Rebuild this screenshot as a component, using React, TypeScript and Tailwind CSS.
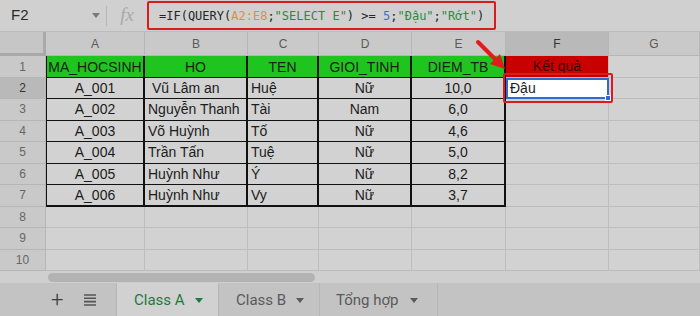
import React from 'react';

const COLS = ['A', 'B', 'C', 'D', 'E', 'F', 'G'];
const GRID = 'grid grid-cols-[46px_99px_103px_71px_93px_94px_103px_1fr]';

type Row = { id: string; ho: string; ten: string; gt: string; diem: string };

const ROWS: Row[] = [
  { id: 'A_001', ho: ' Vũ Lâm an', ten: 'Huệ', gt: 'Nữ', diem: '10,0' },
  { id: 'A_002', ho: 'Nguyễn Thanh', ten: 'Tài', gt: 'Nam', diem: '6,0' },
  { id: 'A_003', ho: 'Võ Huỳnh', ten: 'Tố', gt: 'Nữ', diem: '4,6' },
  { id: 'A_004', ho: 'Trần Tấn', ten: 'Tuệ', gt: 'Nữ', diem: '5,0' },
  { id: 'A_005', ho: 'Huỳnh Như', ten: 'Ý', gt: 'Nữ', diem: '8,2' },
  { id: 'A_006', ho: 'Huỳnh Như', ten: 'Vy', gt: 'Nữ', diem: '3,7' },
];

const HEADERS = ['MA_HOCSINH', 'HO', 'TEN', 'GIOI_TINH', 'DIEM_TB'];
const ALIGN = ['justify-center', 'justify-start', 'justify-start', 'justify-center', 'justify-center'];
const ROW_H = 'h-[21.5px]';

function Caret({ className = '' }: { className?: string }) {
  return (
    <svg width="8" height="5" viewBox="0 0 8 5" className={className}>
      <path d="M0 0h8L4 5z" fill="currentColor" />
    </svg>
  );
}

function FormulaBar() {
  return (
    <div className="flex h-[32px] items-center border-b border-[#bcbcbc] bg-[#d0d0d0]">
      <div className="flex w-[106px] items-center pl-[11px] text-[15px] text-[#2a2a2a]">
        <span>F2</span>
        <Caret className="ml-auto mr-[6px] text-[#7a7a7a]" />
      </div>
      <div className="h-[20px] w-px bg-[#b8b8b8]" />
      <span className="w-[40px] text-center font-['Liberation_Serif'] text-[19px] italic text-[#a8a8a8]">fx</span>
      <div className="flex h-[29px] w-[349px] items-center overflow-hidden whitespace-pre rounded-[2px] border-2 border-[#d81c1c] pl-[10px] font-['DejaVu_Sans_Mono',monospace] text-[12px] text-[#262626]">
        <span>=IF(QUERY(</span>
        <span className="text-[#d99140]">A2:E8</span>
        <span>;</span>
        <span className="text-[#2b8a3e]">"SELECT E"</span>
        <span>) &gt;= </span>
        <span className="text-[#3f6fc8]">5</span>
        <span>;</span>
        <span className="text-[#2b8a3e]">"Đậu"</span>
        <span>;</span>
        <span className="text-[#2b8a3e]">"Rớt"</span>
        <span>)</span>
      </div>
    </div>
  );
}

function ColumnHeader() {
  return (
    <div className={`${GRID} h-[24px] text-[12px] text-[#5a5a5a]`}>
      <div className="border-b-[3px] border-r-[3px] border-[#a9a9a9] bg-[#c6c6c6]" />
      {COLS.map((c) => (
        <div
          key={c}
          className={`flex items-center justify-center border-b border-r border-[#b6b6b6] ${
            c === 'F' ? 'bg-[#b9b9b9] text-[#333]' : 'bg-[#c9c9c9]'
          }`}
        >
          {c}
        </div>
      ))}
    </div>
  );
}

function RowHead({ n }: { n: number }) {
  return (
    <div
      className={`flex items-center justify-center border-b border-r border-[#b6b6b6] text-[12px] ${
        n === 2 ? 'bg-[#b9b9b9] text-[#333]' : 'bg-[#c9c9c9] text-[#666]'
      }`}
    >
      {n}
    </div>
  );
}

function Blank() {
  return <div className="border-b border-r border-[#bdbdbd]" />;
}

function Sheet() {
  return (
    <div className="relative bg-[#d2d2d2] font-['Liberation_Sans',Arial,sans-serif] text-[14px] text-[#1c1c1c]">
      <ColumnHeader />

      {/* header row 1 */}
      <div className={`${GRID} ${ROW_H}`}>
        <RowHead n={1} />
        {HEADERS.map((h, i) => (
          <div
            key={h}
            className={`flex items-center justify-center border-b-[1.5px] border-r-2 border-[#111] bg-[#1fc41f] leading-none ${i === 0 ? 'border-l' : ''}`}
          >
            {h}
          </div>
        ))}
        <div className="flex items-center justify-center border-b border-r border-[#bdbdbd] bg-[#c90000] text-[#3a0000]">
          Kết quả
        </div>
        <Blank />
      </div>

      {ROWS.map((r, ri) => {
        const vals = [r.id, r.ho, r.ten, r.gt, r.diem];
        return (
          <div key={r.id} className={`${GRID} ${ROW_H}`}>
            <RowHead n={ri + 2} />
            {vals.map((v, i) => (
              <div
                key={i}
                className={`flex items-center whitespace-pre px-[3px] leading-none ${ALIGN[i]} border-r-2 border-[#111] ${
                  ri === ROWS.length - 1 ? 'border-b-2' : 'border-b-[1.5px]'
                } ${i === 0 ? 'border-l' : ''}`}
              >
                {v}
              </div>
            ))}
            {ri === 0 ? (
              <div className="relative flex items-center border-2 border-[#2f6bd8] bg-white pl-[2px] leading-none">
                Đậu
                <span className="absolute -bottom-[4px] -right-[4px] h-[6px] w-[6px] border border-white bg-[#2f6bd8]" />
              </div>
            ) : (
              <Blank />
            )}
            <Blank />
          </div>
        );
      })}

      {[8, 9, 10].map((n) => (
        <div key={n} className={`${GRID} ${ROW_H}`}>
          <RowHead n={n} />
          {COLS.map((c) => (
            <div key={c} className="border-b border-r border-[#bdbdbd]" />
          ))}
        </div>
      ))}

      {/* red highlight around F2 */}
      <div className="pointer-events-none absolute left-[503px] top-[41px] h-[30px] w-[110px] rounded-[2px] border-2 border-[#e0191d]" />

      {/* arrow pointing at F1 */}
      <svg className="absolute left-[472px] top-[5px]" width="40" height="40" viewBox="0 0 40 40">
        <line x1="6" y1="5" x2="26" y2="25" stroke="#e31b1b" strokeWidth="4" strokeLinecap="round" />
        <path d="M33 32 L18 27 L28 17 Z" fill="#e31b1b" />
      </svg>
    </div>
  );
}

function TabBar() {
  return (
    <div className="font-['Roboto',sans-serif]">
      <div className="flex h-[12px] items-center bg-[#cfcfcf] pl-[48px]">
        <div className="h-[9px] w-[267px] rounded-full bg-[#b3b3b3]" />
      </div>
      <div className="flex h-[34px] items-stretch bg-[#c3c3c3] text-[15px]">
        <div className="flex w-[117px] items-center gap-[21px] pl-[51px] text-[#3c3c3c]">
          <span className="text-[22px] font-light leading-none">+</span>
          <svg width="12" height="12" viewBox="0 0 12 12">
            <path d="M0 1h12M0 4.3h12M0 7.6h12M0 11h12" stroke="#555" strokeWidth="1.6" />
          </svg>
        </div>
        <div className="flex w-[101px] items-center gap-[10px] bg-[#d1d1d1] pl-[17px] text-[#1e7a3b] shadow-[0_1px_2px_rgba(0,0,0,0.2)]">
          <span>Class A</span>
          <Caret />
        </div>
        <div className="flex w-[102px] items-center gap-[10px] border-r border-[#b6b6b6] pl-[18px] text-[#5a5a5a]">
          <span>Class B</span>
          <Caret />
        </div>
        <div className="flex w-[118px] items-center gap-[12px] border-r border-[#b6b6b6] pl-[16px] text-[#5a5a5a]">
          <span>Tổng hợp</span>
          <Caret />
        </div>
      </div>
    </div>
  );
}

export default function App() {
  return (
    <div className="h-[316px] w-[700px] overflow-hidden bg-[#cfcfcf] font-['Liberation_Sans',Arial,sans-serif]">
      <FormulaBar />
      <Sheet />
      <TabBar />
    </div>
  );
}
